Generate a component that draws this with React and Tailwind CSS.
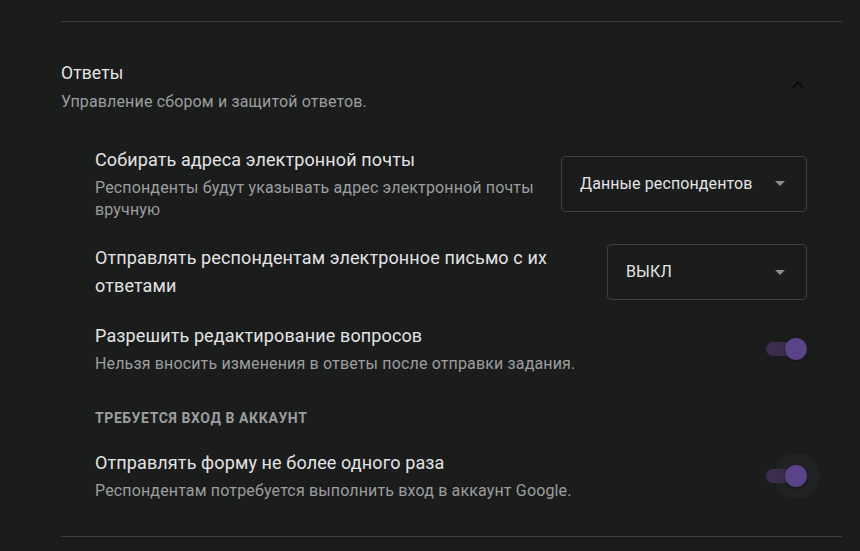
import React from "react";

function Dropdown({ label, width }) {
  return (
    <div
      className={`flex h-[56px] shrink-0 items-center rounded-[4px] border border-[#3f4040] pl-[18px] pr-[21px] ${width}`}
    >
      <span className="text-[16px] leading-[20px] tracking-[0.1px] text-[#e3e3e3]">{label}</span>
      <svg className="ml-auto" width="10" height="5" viewBox="0 0 10 5">
        <path d="M0 0 L10 0 L5 5 Z" fill="#8d8f90" />
      </svg>
    </div>
  );
}

function Toggle({ halo }) {
  return (
    <div className="relative h-[22px] w-[41px] shrink-0">
      {halo && (
        <div className="absolute left-[8px] top-[-12px] h-[46px] w-[46px] rounded-full bg-[#202224]" />
      )}
      <div className="absolute left-0 top-[4px] h-[14px] w-[34px] rounded-full bg-[#3a2d4e]" />
      <div className="absolute right-0 top-0 h-[22px] w-[22px] rounded-full bg-[#5a4388] shadow-[0_1px_3px_rgba(0,0,0,0.5)]" />
    </div>
  );
}

function Row({ title, desc, control }) {
  return (
    <div className="flex items-center gap-4">
      <div className="min-w-0 flex-1">
        <div className="text-[18px] leading-[28px] tracking-[0.12px] text-[#e3e3e3]">{title}</div>
        {desc && (
          <div className="mt-[3px] text-[16px] leading-[22px] tracking-[0.15px] text-[#9c9e9f]">
            {desc}
          </div>
        )}
      </div>
      {control}
    </div>
  );
}

export default function App() {
  return (
    <div className="min-h-[551px] w-full bg-[#1b1c1c] pl-[61px] pr-[18px] pt-[21px] font-['Roboto',sans-serif]">
      <div className="h-px bg-[#3d3e3e]" />
      <div className="mt-[39px] flex items-start justify-between">
        <div>
          <div className="text-[17.5px] leading-[24px] tracking-[0.12px] text-[#e3e3e3]">Ответы</div>
          <div className="mt-[6px] text-[16px] leading-[22px] tracking-[0.15px] text-[#9c9e9f]">
            Управление сбором и защитой ответов.
          </div>
        </div>
        <svg className="mr-[32px] mt-[12px]" width="24" height="24" viewBox="0 0 24 24">
          <path d="M12 8l-6 6 1.41 1.41L12 10.83l4.59 4.58L18 14z" fill="#0a0a0a" />
        </svg>
      </div>

      <div className="mt-[33px] pl-[34px] pr-[35px]">
        <Row
          title="Собирать адреса электронной почты"
          desc="Респонденты будут указывать адрес электронной почты вручную"
          control={<Dropdown label="Данные респондентов" width="w-[246px]" />}
        />
        <div className="mt-[23px]">
          <Row
            title="Отправлять респондентам электронное письмо с их ответами"
            control={<Dropdown label="ВЫКЛ" width="w-[200px]" />}
          />
        </div>
        <div className="mt-[22px]">
          <Row
            title="Разрешить редактирование вопросов"
            desc="Нельзя вносить изменения в ответы после отправки задания."
            control={<Toggle />}
          />
        </div>
        <div className="mt-[35px] text-[14px] font-bold uppercase leading-[16px] tracking-[0.6px] text-[#9c9e9f]">
          Требуется вход в аккаунт
        </div>
        <div className="mt-[23px]">
          <Row
            title="Отправлять форму не более одного раза"
            desc="Респондентам потребуется выполнить вход в аккаунт Google."
            control={<Toggle halo />}
          />
        </div>
      </div>
      <div className="mt-[34px] h-px bg-[#3d3e3e]" />
    </div>
  );
}
